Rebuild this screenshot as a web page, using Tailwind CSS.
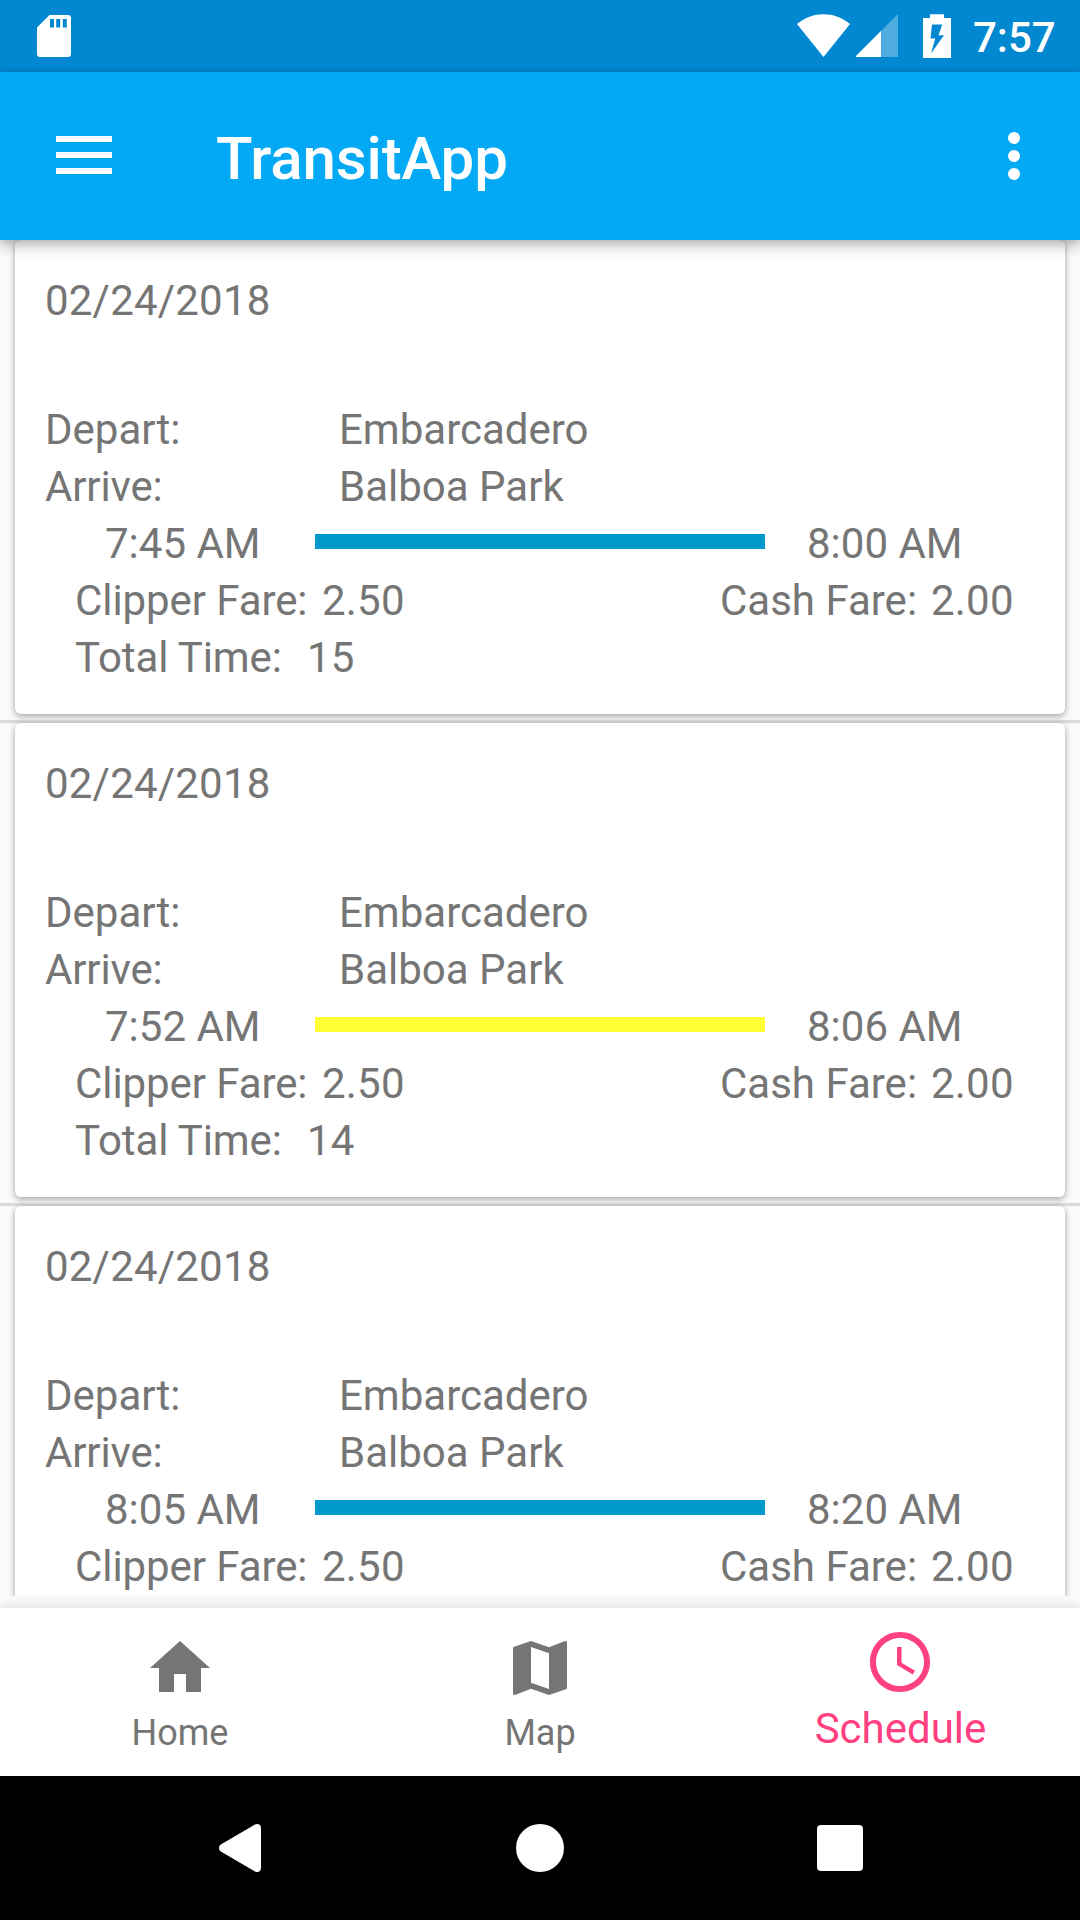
<!DOCTYPE html>
<html lang="en">
<head>
<meta charset="utf-8">
<title>TransitApp</title>
<script src="https://cdn.jsdelivr.net/npm/@tailwindcss/browser@4"></script>
</head>
<body class="bg-black">
<div class="flex h-[1920px] w-[1080px] flex-col overflow-hidden bg-[#fafafa] font-[Roboto,sans-serif] text-[42px] leading-[57px] text-[#757575]">

  <!-- Status bar -->
  <div class="flex h-[72px] shrink-0 items-start bg-[#0288d1] text-white">
    <svg class="mt-[15px] ml-[37px] h-[42px] w-[34px]" viewBox="0 0 34 42"><path fill="currentColor" fill-rule="evenodd" d="M12.500 0H31a3 3 0 0 1 3 3v36a3 3 0 0 1-3 3H3a3 3 0 0 1-3-3V12.500zM13 4v8.500h4V4zM19.200 4v8.500h4V4zM25.800 4v8.500h4V4z"/></svg>
    <svg class="mt-[14px] ml-[726px] h-[43px] w-[54px]" viewBox="0 0 54 43"><path fill="currentColor" d="M26.500 43 0 10C8 3.500 17 .3 26.500 .3S45 3.500 53 10z"/></svg>
    <svg class="mt-[14px] ml-[5px] h-[43px] w-[43px]" viewBox="0 0 43 43"><path fill="currentColor" fill-opacity=".3" d="M42 0v43H-1z"/><path fill="currentColor" d="M25 17v26H-1z"/></svg>
    <svg class="mt-[14px] ml-[24px] h-[44px] w-[28px]" viewBox="0 0 28 44"><path fill="currentColor" fill-rule="evenodd" d="M7 .3h14V4h7v40H0V4h7zM9 10.500 7.500 24.500h4.800L8 39.500 21 21.300h-5.500L19.300 10.500z"/></svg>
    <span class="mt-[9px] ml-[22px] font-medium">7:57</span>
  </div>

  <!-- App bar -->
  <header class="relative z-10 flex h-[168px] shrink-0 items-center bg-[#03a9f4] text-white shadow-[0_6px_12px_rgba(0,0,0,0.26),0_0_6px_rgba(0,0,0,0.12)]">
    <svg class="mt-[-2px] ml-[56px] h-[38px] w-[56px]" viewBox="0 0 56 38"><path fill="currentColor" d="M0 0h56v6H0zM0 16h56v6H0zM0 32h56v6H0z"/></svg>
    <h1 class="mt-[6px] ml-[104px] text-[60px] leading-[70px] font-medium tracking-[-0.15px]">TransitApp</h1>
    <svg class="mr-[60px] ml-auto h-[48px] w-[12px]" viewBox="0 0 12 48"><g fill="currentColor"><circle cx="6" cy="6" r="6"/><circle cx="6" cy="24" r="6"/><circle cx="6" cy="42" r="6"/></g></svg>
  </header>

  <!-- Trip list -->
  <main class="h-[1356px] shrink-0 overflow-hidden">
    <article class="mx-[15px] h-[474px] rounded-[6px] bg-white pt-[32px] pl-[30px] shadow-[0_3px_6px_rgba(0,0,0,0.24),0_0_6px_rgba(0,0,0,0.14)]">
      <div class="tracking-[0.2px]">02/24/2018</div>
      <div class="mt-[72px] flex"><span class="w-[294px]">Depart:</span><span>Embarcadero</span></div>
      <div class="flex"><span class="w-[294px] tracking-[-0.15px]">Arrive:</span><span>Balboa Park</span></div>
      <div class="flex pl-[60px]"><span class="w-[210px]">7:45 AM</span><span class="mt-[19px] h-[15px] w-[450px] bg-[#0099cc]"></span><span class="ml-[42px]">8:00 AM</span></div>
      <div class="flex pl-[30px]"><span class="w-[247px] tracking-[-0.08px]">Clipper Fare:</span><span class="w-[398px] tracking-[0.2px]">2.50</span><span class="w-[211px]">Cash Fare:</span><span class="tracking-[0.2px]">2.00</span></div>
      <div class="flex pl-[30px]"><span class="w-[232px] tracking-[-0.1px]">Total Time:</span><span class="tracking-[0.2px]">15</span></div>
    </article>
    <div class="mt-[6px] h-[3px] bg-[#dadada]"></div>
    <article class="mx-[15px] h-[474px] rounded-[6px] bg-white pt-[32px] pl-[30px] shadow-[0_3px_6px_rgba(0,0,0,0.24),0_0_6px_rgba(0,0,0,0.14)]">
      <div class="tracking-[0.2px]">02/24/2018</div>
      <div class="mt-[72px] flex"><span class="w-[294px]">Depart:</span><span>Embarcadero</span></div>
      <div class="flex"><span class="w-[294px] tracking-[-0.15px]">Arrive:</span><span>Balboa Park</span></div>
      <div class="flex pl-[60px]"><span class="w-[210px]">7:52 AM</span><span class="mt-[19px] h-[15px] w-[450px] bg-[#ffff33]"></span><span class="ml-[42px]">8:06 AM</span></div>
      <div class="flex pl-[30px]"><span class="w-[247px] tracking-[-0.08px]">Clipper Fare:</span><span class="w-[398px] tracking-[0.2px]">2.50</span><span class="w-[211px]">Cash Fare:</span><span class="tracking-[0.2px]">2.00</span></div>
      <div class="flex pl-[30px]"><span class="w-[232px] tracking-[-0.1px]">Total Time:</span><span class="tracking-[0.2px]">14</span></div>
    </article>
    <div class="mt-[6px] h-[3px] bg-[#dadada]"></div>
    <article class="mx-[15px] h-[474px] rounded-[6px] bg-white pt-[32px] pl-[30px] shadow-[0_3px_6px_rgba(0,0,0,0.24),0_0_6px_rgba(0,0,0,0.14)]">
      <div class="tracking-[0.2px]">02/24/2018</div>
      <div class="mt-[72px] flex"><span class="w-[294px]">Depart:</span><span>Embarcadero</span></div>
      <div class="flex"><span class="w-[294px] tracking-[-0.15px]">Arrive:</span><span>Balboa Park</span></div>
      <div class="flex pl-[60px]"><span class="w-[210px]">8:05 AM</span><span class="mt-[19px] h-[15px] w-[450px] bg-[#0099cc]"></span><span class="ml-[42px]">8:20 AM</span></div>
      <div class="flex pl-[30px]"><span class="w-[247px] tracking-[-0.08px]">Clipper Fare:</span><span class="w-[398px] tracking-[0.2px]">2.50</span><span class="w-[211px]">Cash Fare:</span><span class="tracking-[0.2px]">2.00</span></div>
    </article>
  </main>

  <!-- Bottom tabs -->
  <nav class="mt-[12px] grid h-[168px] shrink-0 grid-cols-3 bg-white shadow-[0_0_12px_rgba(0,0,0,0.15)]">
    <div class="flex flex-col items-center pt-[24px]">
      <svg class="size-[72px]" viewBox="0 0 24 24"><path fill="currentColor" d="M10 20v-6h4v6h5v-8h3L12 3 2 12h3v8z"/></svg>
      <span class="mt-[8px] text-[36px] leading-[42px]">Home</span>
    </div>
    <div class="flex flex-col items-center pt-[24px]">
      <svg class="size-[72px]" viewBox="0 0 24 24"><path fill="currentColor" d="M20.500 3l-.16.03L15 5.100 9 3 3.360 4.900c-.21.07-.36.25-.36.48V20.500c0 .28.22.5.5.5l.16-.03L9 18.900l6 2.100 5.640-1.900c.21-.07.36-.25.36-.48V3.500c0-.28-.22-.5-.5-.5zM15 19l-6-2.110V5l6 2.110V19z"/></svg>
      <span class="mt-[8px] text-[36px] leading-[42px]">Map</span>
    </div>
    <div class="flex flex-col items-center pt-[18px] text-[#ff4081]">
      <svg class="size-[72px]" viewBox="0 0 24 24"><path fill="currentColor" d="M11.990 2C6.470 2 2 6.480 2 12s4.470 10 9.990 10C17.520 22 22 17.520 22 12S17.520 2 11.990 2zM12 20c-4.420 0-8-3.580-8-8s3.580-8 8-8 8 3.580 8 8-3.580 8-8 8z"/><path fill="currentColor" d="M12.500 7H11v6l5.250 3.150.75-1.230-4.500-2.670z"/></svg>
      <span class="mt-[2px] pl-px">Schedule</span>
    </div>
  </nav>

  <!-- System navigation -->
  <div class="z-10 flex h-[144px] shrink-0 items-center bg-black text-white">
    <svg class="ml-[219px] h-[48px] w-[42px]" viewBox="0 0 42 48"><path fill="currentColor" d="M36 .6C39 -1 42 .8 42 4v40c0 3.200-3 5-6 3.400L1.800 27.500c-2.400-1.400-2.400-5.600 0-7z"/></svg>
    <div class="ml-[255px] size-[48px] rounded-full bg-white"></div>
    <div class="ml-[253px] size-[46px] rounded-[4px] bg-white"></div>
  </div>
</div>
</body>
</html>
